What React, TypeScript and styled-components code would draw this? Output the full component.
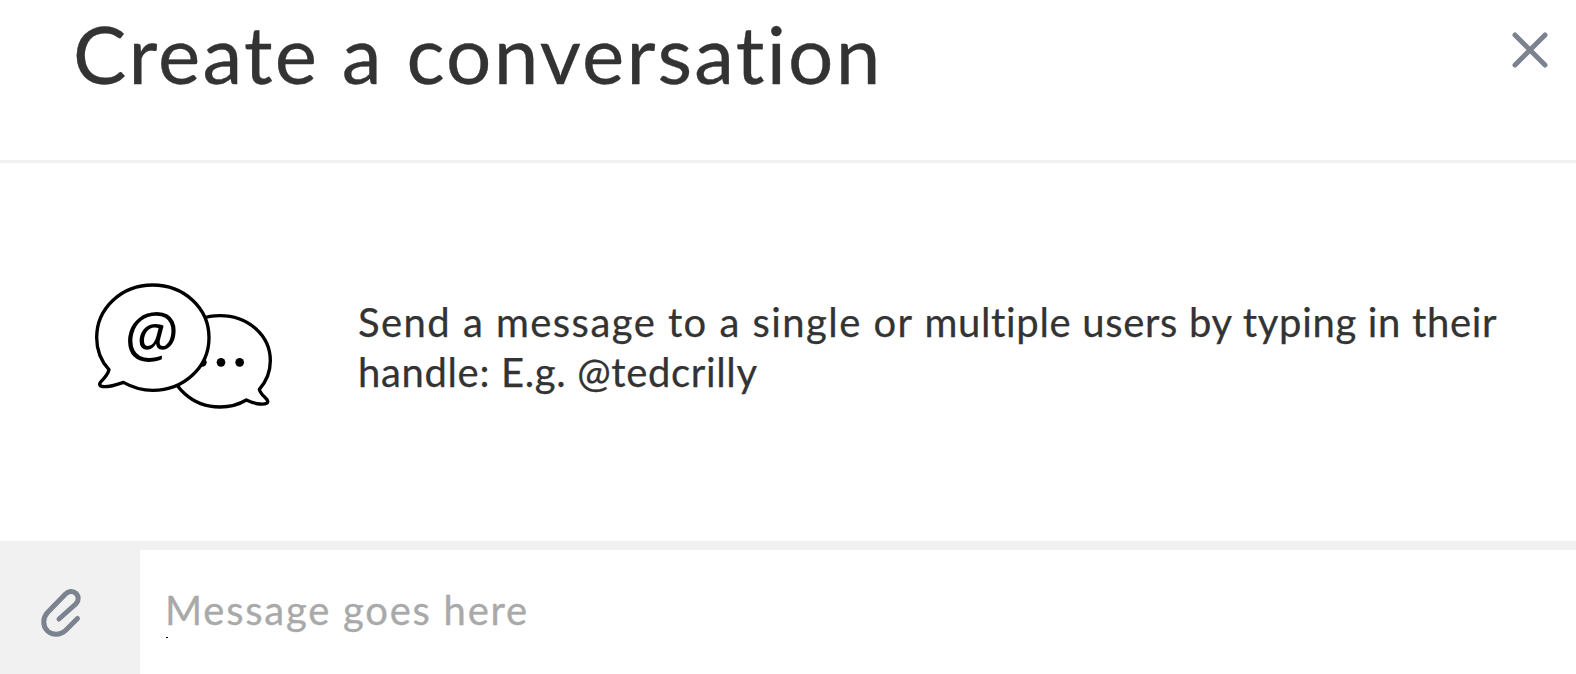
import styled, { createGlobalStyle } from 'styled-components'


const grey = '#f1f1f1'
const slate = '#7c8390'
const ink = '#333333'

const GlobalStyle = createGlobalStyle`
    body {
        margin: 0;
        background-color: #fff;
        color: ${ink};
        font-family: Lato, 'Liberation Sans', sans-serif;
    }

    *, *::before, *::after {
        box-sizing: border-box;
    }
`

const Modal = styled.main`
    display: flex;
    flex-direction: column;
    height: 674px;
    overflow: hidden;
`

const Header = styled.header`
    display: flex;
    justify-content: space-between;
    align-items: flex-start;
    height: 163px;
    padding: 5px 27px 0 73px;
    border-bottom: 3px solid ${grey};
`

const Title = styled.h1`
    margin: 0;
    font-size: 80px;
    font-weight: 400;
    line-height: 96px;
    letter-spacing: 2.2px;
    white-space: nowrap;
    -webkit-text-stroke: 0.3px ${ink};
`

const CloseButton = styled.button`
    display: flex;
    margin-top: 26px;
    padding: 0;
    border: 0;
    background: none;
    cursor: pointer;
`

const Intro = styled.section`
    display: flex;
    flex: 1;
    align-items: flex-start;
    padding: 107px 0 0 80px;
`

const IntroText = styled.p`
    margin: 27px 0 0 68px;
    font-size: 40px;
    line-height: 50px;
    white-space: nowrap;
    -webkit-text-stroke: 0.25px ${ink};
`

const Phrase = styled.span<{ $spacing: number }>`
    letter-spacing: ${({ $spacing }) => $spacing}px;
`

const Composer = styled.footer`
    display: flex;
    height: 133px;
    border-top: 9px solid ${grey};
`

const AttachButton = styled.button`
    display: flex;
    flex: 0 0 140px;
    padding: 36px 0 0 38px;
    border: 0;
    background-color: ${grey};
    cursor: pointer;
`

const Field = styled.div`
    position: relative;
    flex: 1;
    padding: 35px 0 0 25px;
    color: #a9a9a9;
    font-size: 40px;
    line-height: 50px;
    letter-spacing: 1.75px;
    white-space: nowrap;
    -webkit-text-stroke: 0.3px #a9a9a9;
`

const Caret = styled.span`
    position: absolute;
    left: 26px;
    top: 87px;
    width: 2px;
    height: 1px;
    background-color: #000;
`


function Bubbles() {
    return <svg width='210' height='150' viewBox='0 0 630 450' fill='#fff' stroke='#000' strokeWidth='10' strokeLinejoin='round'>
        <path d='M420 137C505 137 571 197 571 272C571 304 559 334 538 358C541 371 552 378 561 389C568 400 558 403 540 402C525 401 512 396 499 390C476 404 449 411 420 411C336 411 270 350 270 272C270 197 336 137 420 137Z' />
        <g fill='#000' stroke='none'>
            <circle cx='367' cy='277' r='13' />
            <circle cx='423' cy='277' r='13' />
            <circle cx='479' cy='277' r='13' />
        </g>
        <path d='M218 45C312 45 387 114 387 203C387 291 312 361 218 361C187 361 157 352 130 337C113 343 94 350 73 350C58 350 56 343 63 335C73 325 84 313 87 299C64 274 50 240 50 203C50 114 125 45 218 45Z' />
        <text x='213' y='262' fill='#000' stroke='none' fontFamily='Open Sans' fontStyle='italic' fontSize='186' textAnchor='middle'>@</text>
    </svg>
}


export default function App() {
    return <Modal>
        <GlobalStyle />
        <Header>
            <Title>Create a conversation</Title>
            <CloseButton aria-label='Close'>
                <svg width='38' height='38' viewBox='0 0 38 38' stroke={slate} strokeWidth='5' strokeLinecap='round'>
                    <path d='M4 4L34 34M34 4L4 34' />
                </svg>
            </CloseButton>
        </Header>
        <Intro>
            <Bubbles />
            <IntroText>
                <Phrase $spacing={1.45}>Send a message to a single or </Phrase>
                <Phrase $spacing={0.67}>multiple users by typing in their</Phrase>
                <br />
                <Phrase $spacing={0.65}>handle: E.g. @tedcrilly</Phrase>
            </IntroText>
        </Intro>
        <Composer>
            <AttachButton aria-label='Attach a file'>
                <svg width='46' height='54' viewBox='0 0 46 54' fill='none' stroke={slate} strokeWidth='5' strokeLinecap='round'>
                    <path d='M39.5 32.5L27.5 44.5C22 49.5 14.5 49.5 9.5 45C4.5 40 4.5 32 9.5 26.5L27.5 8C30.5 5 34.5 4.8 37.5 7C41 10 41 14.5 38 17.8L21 33' />
                </svg>
            </AttachButton>
            <Field>
                Message goes here
                <Caret />
            </Field>
        </Composer>
    </Modal>
}
